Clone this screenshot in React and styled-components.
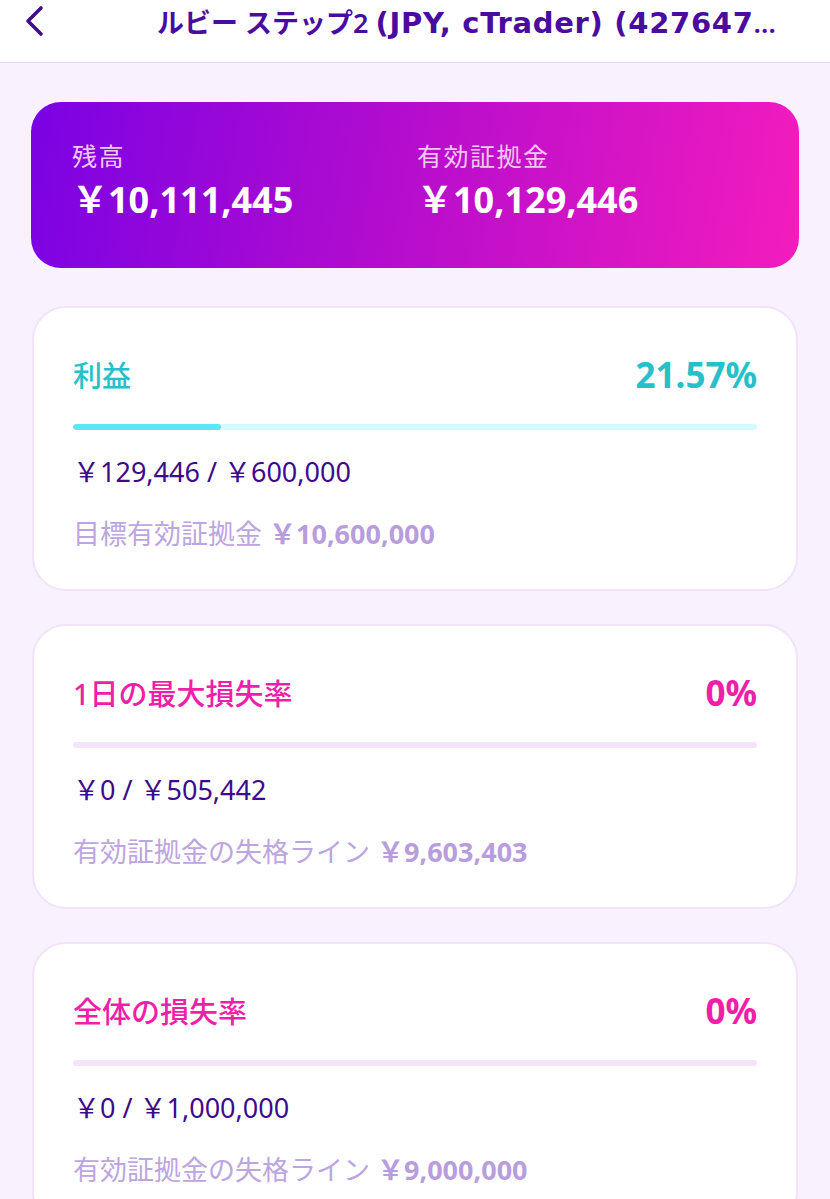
import React from "react";
import styled, { createGlobalStyle } from "styled-components";

const Global = createGlobalStyle`
  html, body { margin: 0; padding: 0; background: #f9f1fd; }
  body { font-family: "Noto Sans", "Noto Sans CJK JP", sans-serif; }
  * { box-sizing: border-box; }
`;

const Page = styled.div`
  width: 830px;
  min-height: 1199px;
  background: #f9f1fd;
  overflow: hidden;
`;

const Header = styled.header`
  height: 63px;
  background: #ffffff;
  border-bottom: 1px solid #e6d8ef;
  display: flex;
  align-items: center;
  padding: 0 44px 2px 19px;
`;

const BackButton = styled.button`
  border: 0;
  background: none;
  padding: 0;
  width: 30px;
  height: 40px;
  display: flex;
  align-items: center;
  justify-content: center;
  margin-top: -18px;
`;

const Title = styled.h1`
  flex: 1;
  min-width: 0;
  margin: -18px 0 0 108px;
  font-family: "Noto Sans", "Noto Sans CJK JP", sans-serif;
  font-size: 27px;
  font-weight: 600;
  color: #4a0c9f;
  white-space: nowrap;
  overflow: hidden;
  text-overflow: ellipsis;
`;

const Latin = styled.span`
  font-family: "DejaVu Sans", "Noto Sans", sans-serif;
  font-size: 29px;
  font-weight: 700;
  letter-spacing: 0.7px;
`;

const Content = styled.main`
  padding: 39px 31px 0 31px;
  display: flex;
  flex-direction: column;
  gap: 39px;
`;

const BalanceCard = styled.section`
  height: 166px;
  border-radius: 30px;
  background: linear-gradient(100deg, #7a02e4 0%, #b10ccf 45%, #f41cbd 100%);
  display: grid;
  grid-template-columns: 345px 1fr;
  padding: 36px 40px 0 41px;
`;

const BalanceItem = styled.div`
  display: flex;
  flex-direction: column;
`;

const BalanceLabel = styled.span`
  font-size: 25px;
  letter-spacing: 1.5px;
  color: #f1c8f3;
  line-height: 36px;
`;

const BalanceValue = styled.span`
  font-size: 36px;
  font-weight: 700;
  color: #ffffff;
  line-height: 48px;
  margin-top: 2px;
`;

const Stack = styled.div`
  display: flex;
  flex-direction: column;
  gap: 33px;
  margin-top: -1px;
`;

const Card = styled.section`
  height: 285px;
  margin: 0 1px;
  background: #ffffff;
  border: 2px solid #f1e3f8;
  border-radius: 34px;
  padding: 46px 39px 0 39px;
`;

const CardHead = styled.div`
  display: flex;
  justify-content: space-between;
  align-items: center;
  height: 40px;
  color: ${(p) => p.$color};
`;

const CardTitle = styled.span`
  font-size: 29px;
  font-weight: 500;
`;

const CardPercent = styled.span`
  font-size: 35px;
  font-weight: 700;
`;

const Track = styled.div`
  margin-top: 30px;
  height: 6px;
  border-radius: 3px;
  background: ${(p) => p.$track};
  overflow: hidden;
`;

const Fill = styled.div`
  height: 100%;
  border-radius: 3px;
  background: ${(p) => p.$fill};
`;

const Amounts = styled.div`
  margin-top: 24px;
  font-size: 27px;
  color: #3e0a8c;
  line-height: 36px;
`;

const SubLine = styled.div`
  margin-top: 26px;
  font-size: 27px;
  color: #bda5e0;
  line-height: 36px;
`;

const SubValue = styled.b`
  font-weight: 700;
  color: #b89ddd;
`;

const Chevron = () => (
  <svg width="22" height="32" viewBox="0 0 22 32" fill="none">
    <path d="M18 3 L5 16 L18 29" stroke="#3f0c8c" strokeWidth="3.6" strokeLinecap="round" strokeLinejoin="round" />
  </svg>
);

const metrics = [
  {
    title: "利益",
    percent: "21.57%",
    color: "#27bfcb",
    track: "#d5fafd",
    fill: "#5ce7f2",
    ratio: 0.2157,
    amounts: "￥129,446 / ￥600,000",
    sub: "目標有効証拠金",
    subValue: "￥10,600,000",
  },
  {
    title: "1日の最大損失率",
    percent: "0%",
    color: "#f01ea9",
    track: "#f4e4f8",
    fill: "#f01ea9",
    ratio: 0,
    amounts: "￥0 / ￥505,442",
    sub: "有効証拠金の失格ライン",
    subValue: "￥9,603,403",
  },
  {
    title: "全体の損失率",
    percent: "0%",
    color: "#f01ea9",
    track: "#f4e4f8",
    fill: "#f01ea9",
    ratio: 0,
    amounts: "￥0 / ￥1,000,000",
    sub: "有効証拠金の失格ライン",
    subValue: "￥9,000,000",
  },
];

export default function App() {
  return (
    <Page>
      <Global />
      <Header>
        <BackButton aria-label="back">
          <Chevron />
        </BackButton>
        <Title>
          ルビー ステップ2 <Latin>(JPY, cTrader) (42764712)</Latin>
        </Title>
      </Header>
      <Content>
        <BalanceCard>
          <BalanceItem>
            <BalanceLabel>残高</BalanceLabel>
            <BalanceValue>￥10,111,445</BalanceValue>
          </BalanceItem>
          <BalanceItem>
            <BalanceLabel>有効証拠金</BalanceLabel>
            <BalanceValue>￥10,129,446</BalanceValue>
          </BalanceItem>
        </BalanceCard>
        <Stack>
          {metrics.map((m) => (
            <Card key={m.title}>
              <CardHead $color={m.color}>
                <CardTitle>{m.title}</CardTitle>
                <CardPercent>{m.percent}</CardPercent>
              </CardHead>
              <Track $track={m.track}>
                <Fill $fill={m.fill} style={{ width: `${m.ratio * 100}%` }} />
              </Track>
              <Amounts>{m.amounts}</Amounts>
              <SubLine>
                {m.sub} <SubValue>{m.subValue}</SubValue>
              </SubLine>
            </Card>
          ))}
        </Stack>
      </Content>
    </Page>
  );
}
